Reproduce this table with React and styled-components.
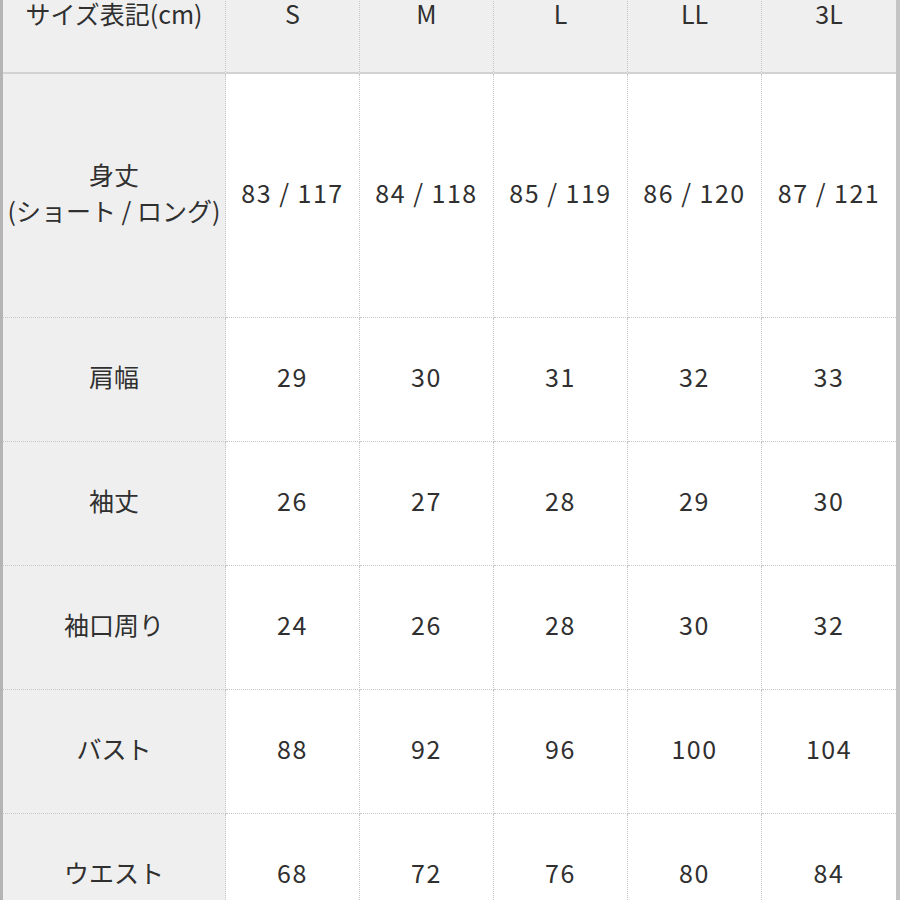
import React from "react";
import styled, { createGlobalStyle } from "styled-components";

const GlobalStyle = createGlobalStyle`
	html, body {
		margin: 0;
		padding: 0;
		background: #ffffff;
		overflow: hidden;
	}
`;

const Frame = styled.div`
	width: 900px;
	height: 900px;
	overflow: hidden;
	box-sizing: border-box;
	border-left: 3px solid #b4b4b4;
	border-right: 4px solid #c4c4c4;
	background: #ffffff;
`;

const Table = styled.div`
	display: grid;
	grid-template-columns: 223px repeat(5, 134px);
	grid-template-rows: 119px 244px repeat(5, 124px);
	margin-top: -45px;
	font-family: "Noto Sans CJK JP", "Noto Sans", sans-serif;
	font-size: 25px;
	color: #303030;
`;

const Cell = styled.div`
	display: flex;
	flex-direction: column;
	align-items: center;
	justify-content: center;
	text-align: center;
	line-height: 36px;
	box-sizing: border-box;
	padding-bottom: ${(p) => (p.head ? "2px" : "7px")};
	letter-spacing: ${(p) => (p.shade ? "0" : "1.5px")};
	border-right: 1px dotted #c6c6c6;
	border-bottom: ${(p) => (p.head ? "2px solid #d2d2d2" : "1px dotted #c6c6c6")};
	background: ${(p) => (p.shade ? "#efefef" : "#ffffff")};

	&:nth-child(6n) {
		border-right: none;
	}
`;

const sizes = ["S", "M", "L", "LL", "3L"];

const rows = [
	{ label: ["身丈", "(ショート / ロング)"], values: ["83 / 117", "84 / 118", "85 / 119", "86 / 120", "87 / 121"] },
	{ label: ["肩幅"], values: ["29", "30", "31", "32", "33"] },
	{ label: ["袖丈"], values: ["26", "27", "28", "29", "30"] },
	{ label: ["袖口周り"], values: ["24", "26", "28", "30", "32"] },
	{ label: ["バスト"], values: ["88", "92", "96", "100", "104"] },
	{ label: ["ウエスト"], values: ["68", "72", "76", "80", "84"] },
];

export default function App() {
	return (
		<>
			<GlobalStyle />
			<Frame>
				<Table>
					<Cell head shade>サイズ表記(cm)</Cell>
					{sizes.map((s) => (
						<Cell key={s} head shade>
							{s}
						</Cell>
					))}
					{rows.map((row) => (
						<React.Fragment key={row.label[0]}>
							<Cell shade>
								{row.label.map((l) => (
									<span key={l}>{l}</span>
								))}
							</Cell>
							{row.values.map((v, i) => (
								<Cell key={i}>{v}</Cell>
							))}
						</React.Fragment>
					))}
				</Table>
			</Frame>
		</>
	);
}
